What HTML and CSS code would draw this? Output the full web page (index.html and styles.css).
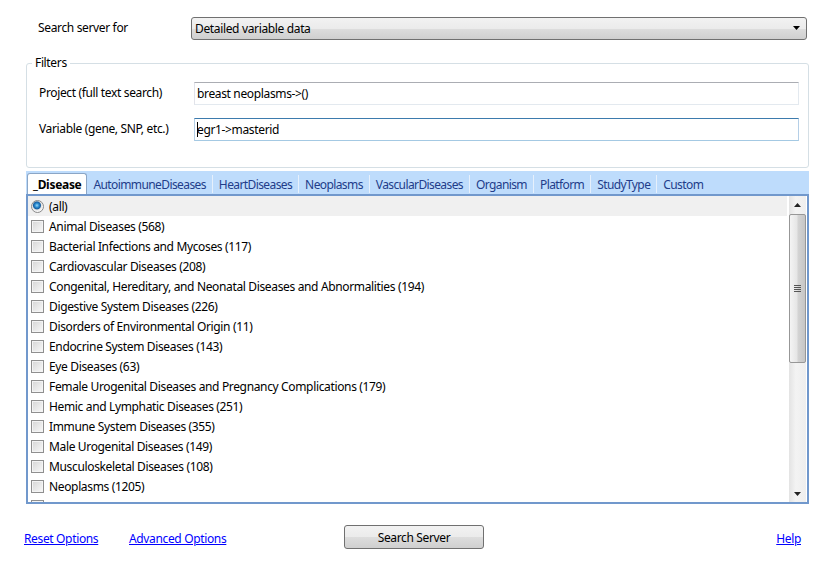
FILE: index.html
```html
<!DOCTYPE html>
<html>
<head>
<meta charset="utf-8">
<link rel="stylesheet" href="styles.css">
</head>
<body>
<div class="app">
  <div class="top-row">
    <span class="top-label">Search server for</span>
    <div class="combo">
      <span class="combo-text">Detailed variable data</span>
      <svg class="combo-arrow" width="8" height="5" viewBox="0 0 8 5"><path d="M0 0H7L3.5 4Z" fill="#000"/></svg>
    </div>
  </div>

  <fieldset class="filters">
    <legend>Filters</legend>
    <div class="field-row">
      <span class="field-label">Project (full text search)</span>
      <div class="textbox">breast neoplasms-&gt;()</div>
    </div>
    <div class="field-row">
      <span class="field-label">Variable (gene, SNP, etc.)</span>
      <div class="textbox focused"><span class="caret"></span>egr1-&gt;masterid</div>
    </div>
  </fieldset>

  <div class="tabs">
    <div class="tab-strip">
      <span class="tab active">_Disease</span>
      <span class="tab">AutoimmuneDiseases</span>
      <span class="tab sep">HeartDiseases</span>
      <span class="tab sep">Neoplasms</span>
      <span class="tab sep">VascularDiseases</span>
      <span class="tab sep">Organism</span>
      <span class="tab sep">Platform</span>
      <span class="tab sep">StudyType</span>
      <span class="tab sep">Custom</span>
    </div>
    <div class="listbox">
      <div class="items">
        <div class="row selected"><span class="radio"></span><span>(all)</span></div>
        <div class="row"><span class="check"></span><span>Animal Diseases (568)</span></div>
        <div class="row"><span class="check"></span><span>Bacterial Infections and Mycoses (117)</span></div>
        <div class="row"><span class="check"></span><span>Cardiovascular Diseases (208)</span></div>
        <div class="row"><span class="check"></span><span>Congenital, Hereditary, and Neonatal Diseases and Abnormalities (194)</span></div>
        <div class="row"><span class="check"></span><span>Digestive System Diseases (226)</span></div>
        <div class="row"><span class="check"></span><span>Disorders of Environmental Origin (11)</span></div>
        <div class="row"><span class="check"></span><span>Endocrine System Diseases (143)</span></div>
        <div class="row"><span class="check"></span><span>Eye Diseases (63)</span></div>
        <div class="row"><span class="check"></span><span>Female Urogenital Diseases and Pregnancy Complications (179)</span></div>
        <div class="row"><span class="check"></span><span>Hemic and Lymphatic Diseases (251)</span></div>
        <div class="row"><span class="check"></span><span>Immune System Diseases (355)</span></div>
        <div class="row"><span class="check"></span><span>Male Urogenital Diseases (149)</span></div>
        <div class="row"><span class="check"></span><span>Musculoskeletal Diseases (108)</span></div>
        <div class="row"><span class="check"></span><span>Neoplasms (1205)</span></div>
        <div class="row"><span class="check"></span></div>
      </div>
      <div class="scrollbar">
        <div class="sb-btn"><svg width="7" height="4" viewBox="0 0 7 4"><path d="M3.5 0L7 4H0Z" fill="#222"/></svg></div>
        <div class="sb-thumb"><span class="grip"></span></div>
        <div class="sb-track"></div>
        <div class="sb-btn"><svg width="7" height="4" viewBox="0 0 7 4"><path d="M0 0H7L3.5 4Z" fill="#222"/></svg></div>
      </div>
    </div>
  </div>

  <div class="footer">
    <a class="link" href="#">Reset Options</a>
    <a class="link" href="#">Advanced Options</a>
    <div class="button">Search Server</div>
    <span></span>
    <a class="link" href="#">Help</a>
  </div>
</div>
</body>
</html>
```

FILE: styles.css
```css
* { box-sizing: border-box; }

html, body {
  margin: 0;
  padding: 0;
  background: #fff;
}

body {
  font-family: "Noto Sans", "Open Sans", "DejaVu Sans", sans-serif;
  font-size: 12px;
  color: #000;
  letter-spacing: -0.35px;
}

.app {
  width: 826px;
  height: 564px;
  padding-top: 17px;
}

/* top row */
.top-row {
  display: flex;
  align-items: center;
  height: 23px;
}

.top-label {
  width: 191px;
  padding-left: 38px;
  margin-top: -2px;
}

.combo {
  width: 616px;
  height: 23px;
  border: 1px solid #707070;
  border-radius: 3px;
  background: linear-gradient(#f2f2f2 0%, #ebebeb 50%, #dddddd 51%, #cfcfcf 100%);
  display: flex;
  align-items: center;
  justify-content: space-between;
  padding: 0 5px 0 3px;
}

.combo-arrow { display: block; }

/* filters group box */
.filters {
  margin: 15px 0 0 26px;
  width: 783px;
  border: 1px solid #d5dfe5;
  border-radius: 3px;
  padding: 11px 0 26px 12px;
  min-width: 0;
}

.filters legend {
  padding: 0 3px;
  margin-left: -7px;
  line-height: 16px;
}

.field-row {
  display: flex;
  align-items: center;
  height: 23px;
}

.field-row + .field-row { margin-top: 13px; }

.field-label {
  width: 155px;
  margin-top: -2px;
}

.textbox {
  width: 605px;
  height: 23px;
  border: 1px solid #e3e9ef;
  border-top-color: #abadb3;
  border-left-color: #e2e3ea;
  display: flex;
  align-items: center;
  padding-left: 2px;
  background: #fff;
}

.textbox.focused {
  border-color: #b5cfe7;
  border-top-color: #3d7bad;
  border-bottom-color: #a4c9e3;
}

.caret {
  display: inline-block;
  width: 1px;
  height: 15px;
  background: #000;
  margin-right: -1px;
}

/* tabs */
.tabs {
  margin: 3px 0 0 26px;
  width: 783px;
}

.tab-strip {
  height: 23px;
  background: #bedcfc;
  display: flex;
  align-items: flex-end;
  padding-left: 1px;
}

.tab {
  height: 20px;
  display: flex;
  align-items: center;
  padding: 0 6px;
  color: #223d8a;
  letter-spacing: -0.6px;
  margin-bottom: 0;
}

.tab.sep {
  border-left: 1px solid #e6f0fc;
  height: 18px;
  margin-bottom: 1px;
}

.tab.active {
  height: 21px;
  margin-bottom: 0;
  background: #fff;
  color: #000;
  font-weight: bold;
  border: 1px solid #8ba6c6;
  border-bottom: none;
  border-radius: 3px 3px 0 0;
  padding: 1px 5px 0 5px;
  letter-spacing: -0.3px;
}

.listbox {
  height: 310px;
  border: 2px solid #7198cc;
  display: flex;
  background: #fff;
}

.items {
  flex: 1;
  overflow: hidden;
}

.row {
  height: 20px;
  display: flex;
  align-items: center;
  padding-left: 3px;
  gap: 5px;
}

.row.selected { background: #f0f0f0; margin-right: 2px; }

.check {
  width: 13px;
  height: 13px;
  border: 1px solid #8f8f8f;
  background: linear-gradient(135deg, #d6d6d6, #f9f9f9);
  box-shadow: inset 0 0 0 1px #f4f4f4;
  flex: none;
}

.radio {
  width: 13px;
  height: 13px;
  border-radius: 50%;
  border: 1px solid #8a8a8a;
  background: radial-gradient(circle at 45% 40%, #9ad6f7 0, #2b8dd2 2px, #165d9f 3.5px, #e3e3e3 4.5px, #f7f7f7 6px);
  flex: none;
}

/* scrollbar */
.scrollbar {
  width: 17px;
  display: flex;
  flex-direction: column;
  background: linear-gradient(90deg, #e3e3e3, #f3f3f3 40%, #eeeeee);
  margin-right: 1px;
}

.sb-btn {
  height: 17px;
  display: flex;
  align-items: center;
  justify-content: center;
  flex: none;
}

.sb-thumb {
  height: 149px;
  margin: 1px 0 0 0;
  border: 1px solid #979797;
  border-radius: 2px;
  background: linear-gradient(90deg, #f4f4f4, #e6e6e6 45%, #d3d3d3 55%, #c6c6c6);
  display: flex;
  align-items: center;
  justify-content: center;
  flex: none;
}

.grip {
  width: 7px;
  height: 7px;
  background: repeating-linear-gradient(#555 0 1px, transparent 1px 2px);
}

.sb-track { flex: 1; }

/* footer */
.footer {
  margin-top: 21px;
  display: grid;
  grid-template-columns: 105px 215px 140px 1fr auto;
  align-items: center;
  padding: 0 25px 0 24px;
  height: 24px;
}

.link {
  color: #0000ff;
  text-decoration: underline;
  justify-self: start;
  margin-top: 2px;
}

.button {
  height: 24px;
  border: 1px solid #707070;
  border-radius: 3px;
  background: linear-gradient(#f2f2f2 0%, #ebebeb 50%, #dddddd 51%, #cfcfcf 100%);
  display: flex;
  align-items: center;
  justify-content: center;
}
```
